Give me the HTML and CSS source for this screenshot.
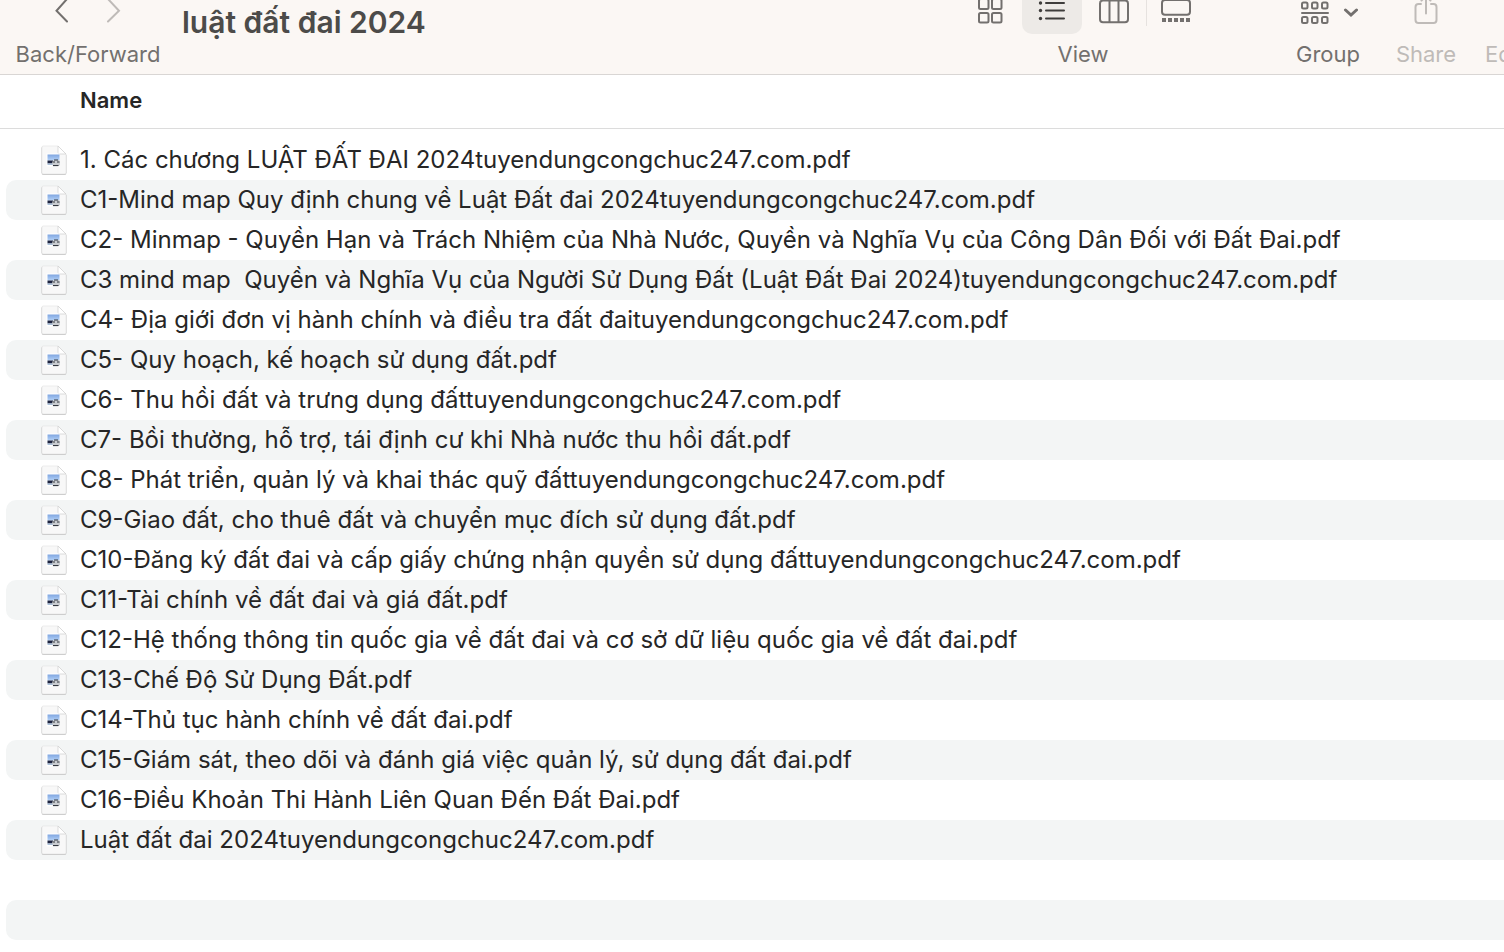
FILE: index.html
```html
<!DOCTYPE html>
<html lang="vi">
<head>
    <meta charset="UTF-8">
    <meta name="viewport" content="width=device-width, initial-scale=1.0">
    <title>luật đất đai 2024</title>
    <link rel="stylesheet" href="styles.css">
</head>
<body>
    <!-- Toolbar -->
    <header class="toolbar">
        <div class="tool nav">
            <div class="tool-buttons">
                <button type="button" aria-label="Back">
                    <svg width="16" height="26" viewBox="0 0 16 26"><path d="M12 -1L1.500 10.800L12 21.500"/></svg>
                </button>
                <button type="button" class="disabled" aria-label="Forward" disabled>
                    <svg width="16" height="26" viewBox="0 0 16 26"><path d="M3 -1L14 10.800L3 21.500"/></svg>
                </button>
            </div>
            <span class="tool-label">Back/Forward</span>
        </div>

        <h1>luật đất đai 2024</h1>

        <div class="tool view">
            <div class="tool-buttons">
                <button type="button" aria-label="Icons">
                    <svg width="30" height="26" viewBox="0 0 30 26">
                        <rect x="4" y="-1" width="9.500" height="10" rx="1.500"/><rect x="17" y="-1" width="9.500" height="10" rx="1.500"/>
                        <rect x="4" y="13" width="9.500" height="9.500" rx="1.500"/><rect x="17" y="13" width="9.500" height="9.500" rx="1.500"/>
                    </svg>
                </button>
                <button type="button" class="selected" aria-label="List">
                    <svg width="30" height="26" viewBox="0 0 30 26">
                        <path d="M9 3H27M9 10.500H27M9 18.500H27"/>
                        <g class="solid"><circle cx="3.500" cy="3" r="1.700"/><circle cx="3.500" cy="10.500" r="1.700"/><circle cx="3.500" cy="18.500" r="1.700"/></g>
                    </svg>
                </button>
                <button type="button" aria-label="Columns">
                    <svg width="30" height="26" viewBox="0 0 30 26">
                        <rect x="1" y="0.500" width="28" height="21.800" rx="3"/><path d="M10.500 0V22M19.500 0V22"/>
                    </svg>
                </button>
                <button type="button" class="divided" aria-label="Gallery">
                    <svg width="30" height="26" viewBox="0 0 30 26">
                        <rect x="1" y="0" width="28" height="14.800" rx="3"/>
                        <path class="solid" d="M1 18h4v4h-4zM7 18h4v4h-4zM13 18h4v4h-4zM19 18h4v4h-4zM25 18h4v4h-4z"/>
                    </svg>
                </button>
            </div>
            <span class="tool-label">View</span>
        </div>

        <div class="tool group">
            <div class="tool-buttons">
                <button type="button" aria-label="Group">
                    <svg width="60" height="26" viewBox="0 0 60 26">
                        <rect x="4" y="2.500" width="5.500" height="6" rx="1.500"/><rect x="14" y="2.500" width="5.500" height="6" rx="1.500"/><rect x="24" y="2.500" width="5.500" height="6" rx="1.500"/>
                        <path d="M4 13H30"/>
                        <rect x="4" y="17" width="5.500" height="6" rx="1.500"/><rect x="14" y="17" width="5.500" height="6" rx="1.500"/><rect x="24" y="17" width="5.500" height="6" rx="1.500"/>
                        <path class="thick" d="M47.500 10L53 15L58.500 10"/>
                    </svg>
                </button>
            </div>
            <span class="tool-label">Group</span>
        </div>

        <div class="tool share disabled">
            <div class="tool-buttons">
                <button type="button" aria-label="Share" disabled>
                    <svg width="30" height="26" viewBox="0 0 30 26">
                        <path d="M10 4H7.500Q4.500 4 4.500 7V20Q4.500 23 7.500 23H22.500Q25.500 23 25.500 20V7Q25.500 4 22.500 4H20M15 0V13.500M10.500 0.500L13 -2M19.500 0.500L17 -2"/>
                    </svg>
                </button>
            </div>
            <span class="tool-label">Share</span>
        </div>

        <div class="tool tags disabled">
            <span class="tool-label">Edit Tags</span>
        </div>
    </header>

    <!-- Document icon used by every row -->
    <svg class="sprite" width="0" height="0" aria-hidden="true">
        <defs>
            <linearGradient id="sky" x1="0" y1="0" x2="0" y2="1">
                <stop offset="0" stop-color="#7fa5e0"/>
                <stop offset="1" stop-color="#b5d3f8"/>
            </linearGradient>
        </defs>
        <symbol id="doc" viewBox="0 0 28 32">
            <path d="M3 2.500H18L26.500 11V28.500Q26.500 31 24.500 31H3.500Q1.500 31 1.500 28.500V4Q1.500 2.500 3 2.500Z" fill="#c4c4c4"/>
            <path d="M3 2H18L26 10V28.500Q26 30 24.500 30H3.500Q2 30 2 28.500V3.500Q2 2 3 2Z" fill="#f8f8f8" stroke="#e2e2e2" stroke-width="0.600"/>
            <path d="M18 2V8.500Q18 10 19.500 10H26Z" fill="#fff" stroke="#cfcfcf" stroke-width="0.700"/>
            <rect x="6.500" y="9.500" width="13" height="13" fill="#fff"/>
            <rect x="7.500" y="10.500" width="12" height="6" fill="url(#sky)"/>
            <path d="M7.500 16.500H13V19.500H7.500Z" fill="#1d2440"/>
            <path d="M7.500 19.500H13V21H7.500Z" fill="#a9bfd8"/>
            <path d="M12 18L14 16H19L20 18V21L18 22.500H13Z" fill="#c9ccd0"/>
            <path d="M12.500 18H15M17 18H19.500M14 16H18M13 21.500H18.500" stroke="#33373f"/>
        </symbol>
    </svg>

    <!-- File list -->
    <table class="files">
        <thead>
            <tr><th scope="col">Name</th></tr>
        </thead>
        <tbody>
            <tr><td><svg class="doc"><use href="#doc"/></svg>1. Các chương LUẬT ĐẤT ĐAI 2024tuyendungcongchuc247.com.pdf</td></tr>
            <tr><td><svg class="doc"><use href="#doc"/></svg>C1-Mind map Quy định chung về Luật Đất đai 2024tuyendungcongchuc247.com.pdf</td></tr>
            <tr><td><svg class="doc"><use href="#doc"/></svg>C2- Minmap - Quyền Hạn và Trách Nhiệm của Nhà Nước, Quyền và Nghĩa Vụ của Công Dân Đối với Đất Đai.pdf</td></tr>
            <tr><td><svg class="doc"><use href="#doc"/></svg>C3 mind map&nbsp; Quyền và Nghĩa Vụ của Người Sử Dụng Đất (Luật Đất Đai 2024)tuyendungcongchuc247.com.pdf</td></tr>
            <tr><td><svg class="doc"><use href="#doc"/></svg>C4- Địa giới đơn vị hành chính và điều tra đất đaituyendungcongchuc247.com.pdf</td></tr>
            <tr><td><svg class="doc"><use href="#doc"/></svg>C5- Quy hoạch, kế hoạch sử dụng đất.pdf</td></tr>
            <tr><td><svg class="doc"><use href="#doc"/></svg>C6- Thu hồi đất và trưng dụng đấttuyendungcongchuc247.com.pdf</td></tr>
            <tr><td><svg class="doc"><use href="#doc"/></svg>C7- Bồi thường, hỗ trợ, tái định cư khi Nhà nước thu hồi đất.pdf</td></tr>
            <tr><td><svg class="doc"><use href="#doc"/></svg>C8- Phát triển, quản lý và khai thác quỹ đấttuyendungcongchuc247.com.pdf</td></tr>
            <tr><td><svg class="doc"><use href="#doc"/></svg>C9-Giao đất, cho thuê đất và chuyển mục đích sử dụng đất.pdf</td></tr>
            <tr><td><svg class="doc"><use href="#doc"/></svg>C10-Đăng ký đất đai và cấp giấy chứng nhận quyền sử dụng đấttuyendungcongchuc247.com.pdf</td></tr>
            <tr><td><svg class="doc"><use href="#doc"/></svg>C11-Tài chính về đất đai và giá đất.pdf</td></tr>
            <tr><td><svg class="doc"><use href="#doc"/></svg>C12-Hệ thống thông tin quốc gia về đất đai và cơ sở dữ liệu quốc gia về đất đai.pdf</td></tr>
            <tr><td><svg class="doc"><use href="#doc"/></svg>C13-Chế Độ Sử Dụng Đất.pdf</td></tr>
            <tr><td><svg class="doc"><use href="#doc"/></svg>C14-Thủ tục hành chính về đất đai.pdf</td></tr>
            <tr><td><svg class="doc"><use href="#doc"/></svg>C15-Giám sát, theo dõi và đánh giá việc quản lý, sử dụng đất đai.pdf</td></tr>
            <tr><td><svg class="doc"><use href="#doc"/></svg>C16-Điều Khoản Thi Hành Liên Quan Đến Đất Đai.pdf</td></tr>
            <tr><td><svg class="doc"><use href="#doc"/></svg>Luật đất đai 2024tuyendungcongchuc247.com.pdf</td></tr>
            <tr><td></td></tr>
            <tr><td></td></tr>
        </tbody>
    </table>
</body>
</html>
```

FILE: styles.css
```css
/* Basic reset */
* {
    margin: 0;
    padding: 0;
    box-sizing: border-box;
}

body {
    font-family: Inter, "Noto Sans", sans-serif;
    font-size: 24px;
    line-height: 40px;
    color: #262626;
    background-color: #fff;
    overflow-x: hidden;
}

/* Toolbar */
.toolbar {
    display: flex;
    align-items: flex-start;
    padding-left: 16px;
    background-color: #fbf7f4;
    border-bottom: 1px solid #d9d6d4;
    overflow: hidden;
}

.toolbar h1 {
    margin-left: 22px;
    font-size: 30px;
    line-height: 44px;
    font-weight: 600;
    color: #4c4b49;
    white-space: nowrap;
}

.tool {
    display: flex;
    flex-direction: column;
    align-items: center;
    flex-shrink: 0;
    color: #73706e;
}

.tool-buttons {
    display: flex;
    gap: 2px;
    height: 34px;
}

.tool-label {
    font-size: 22px;
    line-height: 40px;
    white-space: nowrap;
}

.tool button {
    display: flex;
    justify-content: center;
    width: 60px;
    height: 34px;
    border: none;
    background: none;
    color: inherit;
}

.tool svg {
    fill: none;
    stroke: currentColor;
    stroke-width: 2;
    stroke-linecap: round;
}

.tool .solid {
    fill: currentColor;
    stroke: none;
}

.tool .thick {
    stroke-width: 3;
}

.tool.disabled,
.tool button.disabled {
    color: #bfbbb8;
}

.nav {
    width: 144px;
}

.nav .tool-buttons {
    gap: 0;
}

.nav button {
    width: 50px;
}

.view {
    margin-left: auto;
}

.view .selected {
    background-color: #edeae7;
    border-radius: 0 0 10px 10px;
    color: #3f3d3c;
}

.view .divided {
    background: linear-gradient(#e6e2df, #e6e2df) left top / 1px 26px no-repeat;
}

.group {
    width: 64px;
    margin-left: 90px;
}

.share {
    width: 60px;
    margin-left: 36px;
}

/* Last item runs past the window edge */
.tags {
    align-items: flex-start;
    width: 19px;
    margin-left: 29px;
    padding-top: 34px;
    overflow: hidden;
}

/* File list */
.sprite {
    display: block;
}

.files {
    border-spacing: 0;
}

.files,
.files thead,
.files tbody {
    display: block;
}

.files thead {
    padding: 5px 0 8px 80px;
    border-bottom: 1px solid #dcdcdc;
}

.files th {
    font-size: 22px;
    font-weight: 600;
    text-align: left;
}

.files tbody {
    padding: 11px 0 12px 6px;
}

.files tr {
    display: block;
}

.files td {
    display: flex;
    align-items: center;
    gap: 12px;
    height: 40px;
    padding-left: 34px;
    border-radius: 10px 0 0 10px;
    white-space: nowrap;
}

.files tbody tr:nth-child(even) td {
    background-color: #f3f5f5;
}

.doc {
    flex-shrink: 0;
    width: 28px;
    height: 32px;
}
```
